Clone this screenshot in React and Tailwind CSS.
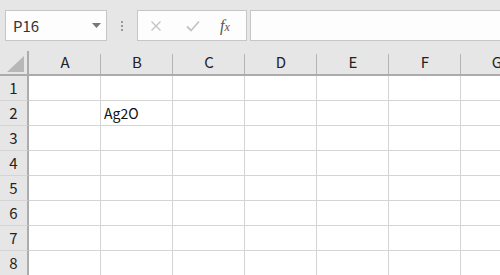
const cols = ['A', 'B', 'C', 'D', 'E', 'F', 'G'];
const rows = [1, 2, 3, 4, 5, 6, 7, 8];

const font = { fontFamily: '"Noto Sans CJK JP", "Liberation Sans", sans-serif' };

export default function App() {
  return (
    <div className="w-[500px] h-[275px] overflow-hidden bg-white" style={font}>
      {/* 数式バー */}
      <div className="h-[51px] bg-[#e6e6e6] flex items-start pt-[10px] pl-[5px]">
        <div className="w-[102px] h-[31px] bg-[#fdfdfd] border border-[#c6c6c6] flex items-center justify-between pl-[7px] pr-[5px]">
          <span className="text-[15px] text-[#333] leading-none">P16</span>
          <svg width="9" height="5" viewBox="0 0 9 5"><path d="M0 0h9L4.5 5z" fill="#777" /></svg>
        </div>
        <div className="w-[30px] h-[31px] flex flex-col items-center justify-center gap-[2px]">
          <span className="w-[2px] h-[2px] bg-[#9a9a9a]" />
          <span className="w-[2px] h-[2px] bg-[#9a9a9a]" />
          <span className="w-[2px] h-[2px] bg-[#9a9a9a]" />
        </div>
        <div className="w-[110px] h-[31px] bg-[#fdfdfd] border border-[#c6c6c6] flex items-center pl-[12px]">
          <svg width="12" height="12" viewBox="0 0 12 12" className="mr-[24px]">
            <path d="M1.5 1.5l9 9M10.5 1.5l-9 9" stroke="#c4c4c4" strokeWidth="1.4" />
          </svg>
          <svg width="14" height="12" viewBox="0 0 14 12" className="mr-[20px]">
            <path d="M1 6.5l4 4 8-9" stroke="#c4c4c4" strokeWidth="1.8" fill="none" />
          </svg>
          <span className="text-[16px] italic text-[#555] leading-none" style={{ fontFamily: '"Liberation Serif", serif' }}>
            f<span className="text-[12px]">x</span>
          </span>
        </div>
        <div className="ml-[3px] flex-1 h-[31px] bg-[#fdfdfd] border border-[#c6c6c6] border-r-0" />
      </div>

      {/* シート */}
      <div className="grid grid-cols-[29px_repeat(7,72px)] grid-rows-[25px_repeat(8,25px)]">
        <div className="bg-[#e6e6e6] border-r-2 border-b-2 border-[#ababab] flex items-end justify-end pr-[3px] pb-[2px]">
          <svg width="17" height="16" viewBox="0 0 17 16"><path d="M17 0v16H0z" fill="#b7b7b7" /></svg>
        </div>
        {cols.map(c => (
          <div key={c} className="bg-[#e6e6e6] border-b-2 border-[#ababab] relative flex items-center justify-center text-[15px] text-[#222]">
            {c}
            <span className="absolute right-0 top-[3px] bottom-0 w-px bg-[#b4b4b4]" />
          </div>
        ))}
        {rows.map(r => (
          <>
            <div key={`h${r}`} className="bg-[#e6e6e6] border-r-2 border-b border-[#ababab] border-b-[#d4d4d4] flex items-center justify-center text-[15px] text-[#222]">
              {r}
            </div>
            {cols.map(c => (
              <div key={`${c}${r}`} className="border-r border-b border-[#d4d4d4] flex items-center pl-[3px] text-[14px] text-[#111]">
                {r === 2 && c === 'B' ? 'Ag2O' : ''}
              </div>
            ))}
          </>
        ))}
      </div>
    </div>
  );
}
